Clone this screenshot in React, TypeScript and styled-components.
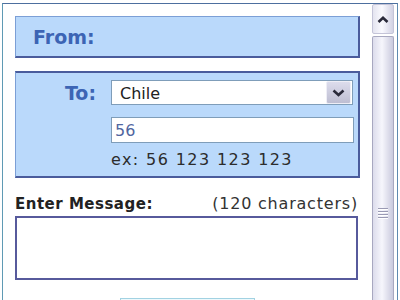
import * as React from 'react';
import styled, { createGlobalStyle } from 'styled-components';

const GlobalStyle = createGlobalStyle`
	html, body {
		margin: 0;
		padding: 0;
		background: #ffffff;
		overflow: hidden;
	}
	body {
		width: 400px;
		height: 300px;
		font-family: "DejaVu Sans", Verdana, sans-serif;
	}
`;

const Frame = styled.div`
	display: flex;
	width: 396px;
	height: 297px;
	margin: 3px 0 0 2px;
	box-sizing: border-box;
	border-top: 1px solid #4d6f9f;
	border-left: 1px solid #5f9ab4;
	border-right: 1px solid #5f8ab0;
	overflow: hidden;
`;

const Content = styled.div`
	width: 345px;
	padding: 12px 12px 0 12px;
	flex-shrink: 0;
`;

const FromBox = styled.div`
	display: flex;
	align-items: center;
	height: 42px;
	box-sizing: border-box;
	padding-left: 17px;
	background: #bad9fb;
	border-top: 1px solid #7c9fd6;
	border-left: 1px solid #7c9fd6;
	border-bottom: 2px solid #4a5c9c;
	border-right: 2px solid #4a5c9c;
`;

const BoxLabel = styled.span`
	font-size: 19px;
	font-weight: bold;
	color: #3c64b4;
	line-height: 24px;
`;

const ToBox = styled.div`
	display: flex;
	margin-top: 13px;
	height: 107px;
	box-sizing: border-box;
	padding-top: 7px;
	background: #bad9fb;
	border-top: 2px solid #4a5c9c;
	border-left: 1px solid #7c9fd6;
	border-bottom: 2px solid #4a5c9c;
	border-right: 2px solid #4a5c9c;
`;

const ToLabel = styled(BoxLabel)`
	width: 80px;
	text-align: right;
	line-height: 26px;
`;

const Fields = styled.div`
	display: flex;
	flex-direction: column;
	width: 243px;
	margin-left: 15px;
`;

const SelectBox = styled.div`
	display: flex;
	align-items: stretch;
	height: 25px;
	box-sizing: border-box;
	background: #ffffff;
	border: 1px solid #7f9db9;
	width: 242px;
`;

const SelectText = styled.span`
	flex: 1;
	padding-left: 8px;
	font-size: 16px;
	line-height: 25px;
	color: #222222;
`;

const SelectButton = styled.div`
	display: flex;
	align-items: center;
	justify-content: center;
	width: 25px;
	margin: 0 1px 0 0;
	box-sizing: border-box;
	background: linear-gradient(#dcdcec, #bebed2);
	border: 1px solid #eeeef6;
	border-radius: 2px;
`;

const TextInput = styled.input`
	margin-top: 12px;
	height: 26px;
	box-sizing: border-box;
	padding: 0 3px;
	border: 1px solid #7f9db9;
	background: #ffffff;
	font-family: "DejaVu Sans", Verdana, sans-serif;
	font-size: 16px;
	color: #5066a0;
	outline: none;
`;

const Hint = styled.div`
	margin-top: 7px;
	font-size: 16px;
	letter-spacing: 1.4px;
	line-height: 20px;
	color: #2c2c2c;
	white-space: nowrap;
`;

const MessageHead = styled.div`
	display: flex;
	justify-content: space-between;
	width: 343px;
	margin-top: 17px;
	line-height: 18px;
	white-space: nowrap;
`;

const MessageLabel = styled.span`
	font-size: 15px;
	font-weight: bold;
	letter-spacing: 0.5px;
	color: #222222;
`;

const Counter = styled.span`
	font-size: 16px;
	letter-spacing: 0.8px;
	color: #333333;
`;

const Message = styled.textarea`
	display: block;
	margin-top: 3px;
	width: 343px;
	height: 64px;
	box-sizing: border-box;
	border: 2px solid #575a9c;
	resize: none;
	outline: none;
	font-family: "DejaVu Sans", Verdana, sans-serif;
	font-size: 14px;
`;

const SendButton = styled.button`
	display: block;
	margin: 18px 0 0 105px;
	width: 135px;
	height: 24px;
	border: 1px solid #a2d2e2;
	background: linear-gradient(#eef9fc, #cfe8f0);
`;

const Scrollbar = styled.div`
	display: flex;
	flex-direction: column;
	width: 22px;
	margin-right: 3px;
	flex-shrink: 0;
`;

const ScrollArrow = styled.div`
	display: flex;
	align-items: center;
	justify-content: center;
	height: 30px;
	box-sizing: border-box;
	border: 1px solid #c4c4d8;
	border-radius: 2px;
	background: linear-gradient(to right, #e4e4f0, #fafaff 45%, #d2d2e4);
`;

const Thumb = styled.div`
	flex: 1;
	display: flex;
	flex-direction: column;
	align-items: center;
	margin-top: 2px;
	padding-top: 171px;
	box-sizing: border-box;
	border: 1px solid #a8a8c0;
	border-bottom: none;
	border-radius: 2px 2px 0 0;
	background: linear-gradient(to right, #dcdcec, #f6f6fc 45%, #cacade);
`;

const GripLine = styled.div`
	width: 10px;
	height: 1px;
	margin-bottom: 2px;
	background: #9a9ab4;
	box-shadow: 0 1px 0 #ffffff;
`;

export default function App() {
	return (
		<>
			<GlobalStyle />
			<Frame>
				<Content>
					<FromBox>
						<BoxLabel>From:</BoxLabel>
					</FromBox>
					<ToBox>
						<ToLabel>To:</ToLabel>
						<Fields>
							<SelectBox>
								<SelectText>Chile</SelectText>
								<SelectButton>
									<svg width="13" height="8" viewBox="0 0 13 8">
										<path d="M1.5 1.5 L6.5 6 L11.5 1.5" fill="none" stroke="#2a2a3a" strokeWidth="2.6" />
									</svg>
								</SelectButton>
							</SelectBox>
							<TextInput defaultValue="56" />
							<Hint>ex: 56 123 123 123</Hint>
						</Fields>
					</ToBox>
					<MessageHead>
						<MessageLabel>Enter Message:</MessageLabel>
						<Counter>(120 characters)</Counter>
					</MessageHead>
					<Message />
					<SendButton aria-label="Send" />
				</Content>
				<Scrollbar>
					<ScrollArrow>
						<svg width="12" height="7" viewBox="0 0 12 7">
							<path d="M1.5 6 L6 1.8 L10.5 6" fill="none" stroke="#2a2a3a" strokeWidth="2.6" />
						</svg>
					</ScrollArrow>
					<Thumb>
						<GripLine />
						<GripLine />
						<GripLine />
						<GripLine />
					</Thumb>
				</Scrollbar>
			</Frame>
		</>
	);
}
